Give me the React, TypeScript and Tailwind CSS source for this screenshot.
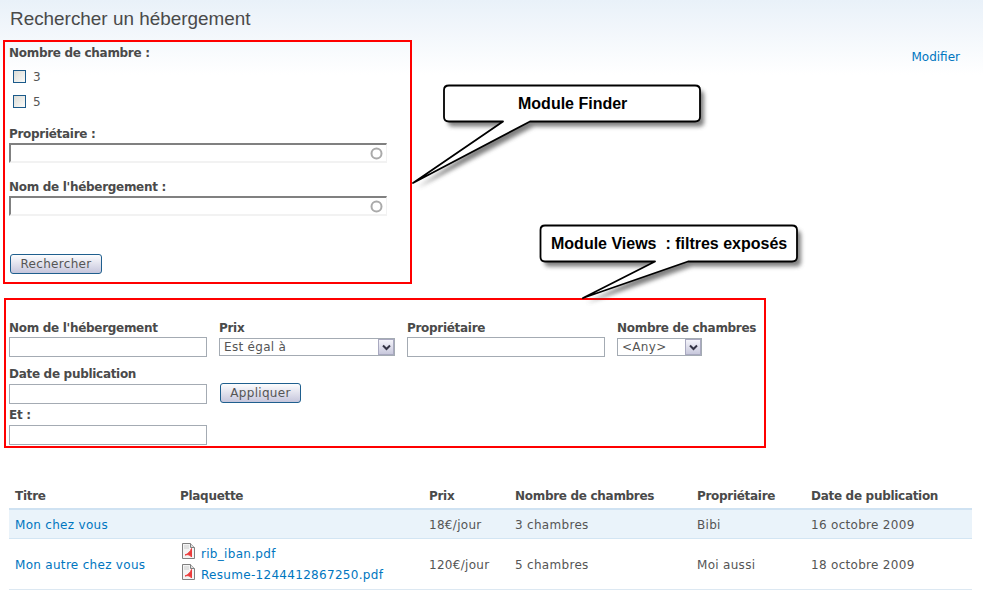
const labelClass = "block text-[12px] leading-[14px] font-bold tracking-[-0.3px] text-[#4a4a4a]";
const inputClass = "block h-[20px] w-[198px] border border-[#a4abb3] bg-white";
const linkClass = "text-[#0076c0]";

function AutocompleteField({ label, gap }: { label: string; gap: string }) {
  return (
    <div>
      <label className={labelClass}>{label}</label>
      <div className={`relative ${gap} h-[20px] w-[378px] border-t-2 border-l-2 border-r border-b-2 border-t-[#808080] border-l-[#808080] border-r-[#f2f2f2] border-b-[#f2f2f2] bg-white`}>
        <svg className="absolute right-[3px] top-[2px]" width="13" height="13" viewBox="0 0 13 13">
          <circle cx="6.5" cy="6.5" r="5" fill="none" stroke="#aaaaaa" strokeWidth="2" />
        </svg>
      </div>
    </div>
  );
}

function Checkbox({ label }: { label: string }) {
  return (
    <div className="ml-[4px] flex h-[25px] items-center gap-[7px]">
      <span className="h-[13px] w-[13px] border border-[#1b5a8a] bg-gradient-to-br from-[#dcdcd6] to-[#fbfbf9]" />
      <span className="text-[12px] leading-[14px] tracking-[0.3px] text-[#555555]">{label}</span>
    </div>
  );
}

function FormButton({ label, width }: { label: string; width: string }) {
  return (
    <button className={`block h-[20px] ${width} rounded-[3px] border border-[#1f5f8e] bg-gradient-to-b from-[#fdfdfe] to-[#c6c6dc] text-center text-[12px] leading-[16px] tracking-[0.3px] text-[#555555]`}>
      {label}
    </button>
  );
}

function SelectBox({ value, width }: { value: string; width: string }) {
  return (
    <div className={`flex h-[18px] ${width} items-center justify-between border border-[#a4abb3] bg-white pl-[4px]`}>
      <span className="text-[12px] leading-[14px] tracking-[0.3px] text-[#555555]">{value}</span>
      <span className="flex h-[16px] w-[16px] items-center justify-center border border-[#a9a9c0] bg-gradient-to-b from-[#f4f4fa] to-[#c8c8dc]">
        <svg width="9" height="7" viewBox="0 0 9 7">
          <path d="M1 1.5 L4.5 5 L8 1.5" fill="none" stroke="#333344" strokeWidth="2" />
        </svg>
      </span>
    </div>
  );
}

function PdfIcon() {
  return (
    <svg width="13" height="16" viewBox="0 0 13 16" className="shrink-0">
      <path d="M0.5 0.5 H8.5 L12.5 4.5 V15.5 H0.5 Z" fill="#f4f4f4" stroke="#808080" />
      <path d="M8.5 0.5 V4.5 H12.5" fill="#dddddd" stroke="#808080" />
      <path d="M2 3 H7 M2 5 H7" stroke="#cccccc" />
      <path d="M3 12 C6 11 8.5 8.5 9.5 5.5 V14 C8.5 12 6 11 3 12 Z" fill="#ec3b3b" stroke="#ec3b3b" />
    </svg>
  );
}

function Callout({ className, width, height, bubble, text, textClass }: {
  className: string;
  width: number;
  height: number;
  bubble: string;
  text: string;
  textClass: string;
}) {
  const id = text.replace(/[^a-z]/gi, "");
  return (
    <div className={`absolute ${className}`} style={{ width, height }}>
      <svg width={width} height={height} className="block">
        <defs>
          <filter id={id} x="-10%" y="-20%" width="120%" height="140%">
            <feGaussianBlur stdDeviation="2.2" />
          </filter>
        </defs>
        <path d={bubble} fill="#555555" opacity="0.75" transform="translate(4 5)" filter={`url(#${id})`} />
        <path d={bubble} fill="#ffffff" stroke="#000000" strokeWidth="1.8" strokeLinejoin="round" />
      </svg>
      <div className={`absolute font-['Liberation_Sans',Arial,sans-serif] text-[16px] leading-[18px] font-bold whitespace-pre text-black ${textClass}`}>
        {text}
      </div>
    </div>
  );
}

const rows = [
  { title: "Mon chez vous", files: [], price: "18€/jour", rooms: "3 chambres", owner: "Bibi", date: "16 octobre 2009" },
  {
    title: "Mon autre chez vous",
    files: ["rib_iban.pdf", "Resume-1244412867250.pdf"],
    price: "120€/jour",
    rooms: "5 chambres",
    owner: "Moi aussi",
    date: "18 octobre 2009",
  },
];

const headers = [
  { label: "Titre", width: "w-[165px]" },
  { label: "Plaquette", width: "w-[249px]" },
  { label: "Prix", width: "w-[86px]" },
  { label: "Nombre de chambres", width: "w-[182px]" },
  { label: "Propriétaire", width: "w-[114px]" },
  { label: "Date de publication", width: "w-[167px]" },
];

export default function App() {
  return (
    <div className="relative h-[595px] w-[983px] overflow-hidden bg-white bg-gradient-to-b from-[#e9f1f9] to-white to-[75px] font-['DejaVu_Sans',Verdana,sans-serif]">
      <h1 className="pt-[8px] pl-[10px] font-['Liberation_Sans',Arial,sans-serif] text-[18.9px] leading-[21px] font-normal text-[#4a4a4a]">
        Rechercher un hébergement
      </h1>

      <div className="mt-[11px] flex items-start justify-between pl-[3px] pr-[23px]">
        {/* Module Finder */}
        <div className="h-[244px] w-[409px] border-2 border-[#ff0000] pl-[4px]">
          <div className="pt-[4px]">
            <label className={labelClass}>Nombre de chambre :</label>
            <div className="mt-[4px]">
              <Checkbox label="3" />
              <Checkbox label="5" />
            </div>
          </div>
          <div className="mt-[13px]">
            <AutocompleteField label="Propriétaire :" gap="mt-[2px]" />
          </div>
          <div className="mt-[17px]">
            <AutocompleteField label="Nom de l'hébergement :" gap="mt-[2px]" />
          </div>
          <div className="ml-[1px] mt-[38px]">
            <FormButton label="Rechercher" width="w-[92px]" />
          </div>
        </div>
        <a className={`mt-[10px] text-[12px] leading-[14px] ${linkClass}`}>Modifier</a>
      </div>

      {/* Module Views */}
      <div className="ml-[4px] mt-[14px] h-[150px] w-[762px] border-2 border-[#ff0000] pl-[3px] pt-[21px]">
        <div className="flex">
          <div className="w-[210px]">
            <label className={labelClass}>Nom de l'hébergement</label>
            <input className={`mt-[2px] ${inputClass}`} />
          </div>
          <div className="w-[188px]">
            <label className={labelClass}>Prix</label>
            <div className="mt-[3px]">
              <SelectBox value="Est égal à" width="w-[176px]" />
            </div>
          </div>
          <div className="w-[210px]">
            <label className={labelClass}>Propriétaire</label>
            <input className={`mt-[2px] ${inputClass}`} />
          </div>
          <div>
            <label className={labelClass}>Nombre de chambres</label>
            <div className="mt-[3px]">
              <SelectBox value="<Any>" width="w-[85px]" />
            </div>
          </div>
        </div>
        <div className="mt-[10px] flex items-end">
          <div className="w-[211px]">
            <label className={labelClass}>Date de publication</label>
            <input className={`mt-[3px] ${inputClass}`} />
          </div>
          <div className="mb-[1px]">
            <FormButton label="Appliquer" width="w-[81px]" />
          </div>
        </div>
        <div className="mt-[4px]">
          <label className={labelClass}>Et :</label>
          <input className={`mt-[3px] ${inputClass}`} />
        </div>
      </div>

      {/* Results */}
      <table className="ml-[9px] mt-[39px] w-[963px] table-fixed border-collapse text-[12px] leading-[14px] tracking-[0.3px] text-[#555555]">
        <thead>
          <tr className="h-[22px] border-b-2 border-[#cfe2f2]">
            {headers.map((h) => (
              <th key={h.label} className={`${h.width} pb-[4px] pl-[6px] text-left font-bold tracking-[-0.3px] text-[#4a4a4a]`}>
                {h.label}
              </th>
            ))}
          </tr>
        </thead>
        <tbody>
          {rows.map((row, i) => (
            <tr key={row.title} className={i === 0 ? "h-[29px] border-b border-[#d3e5f3] bg-[#eaf3fa]" : "h-[51px] border-b border-[#dce8f2]"}>
              <td className="pl-[6px] pt-[2px]"><a className={linkClass}>{row.title}</a></td>
              <td className="pl-[8px]">
                {row.files.map((file) => (
                  <div key={file} className="flex h-[21px] items-start gap-[6px]">
                    <PdfIcon />
                    <a className={`mt-[4px] ${linkClass}`}>{file}</a>
                  </div>
                ))}
              </td>
              <td className="pl-[6px] pt-[2px]">{row.price}</td>
              <td className="pl-[6px] pt-[2px]">{row.rooms}</td>
              <td className="pl-[6px] pt-[2px]">{row.owner}</td>
              <td className="pl-[6px] pt-[2px]">{row.date}</td>
            </tr>
          ))}
        </tbody>
      </table>

      <Callout
        className="left-[405px] top-[80px]"
        width={310}
        height={115}
        bubble="M44 5.5 Q39 5.5 39 10 V37 Q39 41.5 44 41.5 H98 L8 103 L125 41.5 H290 Q295 41.5 295 37 V10 Q295 5.5 290 5.5 Z"
        text="Module Finder"
        textClass="left-[113px] top-[15px]"
      />
      <Callout
        className="left-[535px] top-[220px]"
        width={275}
        height={90}
        bubble="M10 5.5 Q5.5 5.5 5.5 10 V37 Q5.5 41.5 10 41.5 H120 L48 78 L153 41.5 H257 Q262 41.5 262 37 V10 Q262 5.5 257 5.5 Z"
        text="Module Views  : filtres exposés"
        textClass="left-[16px] top-[15px]"
      />
    </div>
  );
}
